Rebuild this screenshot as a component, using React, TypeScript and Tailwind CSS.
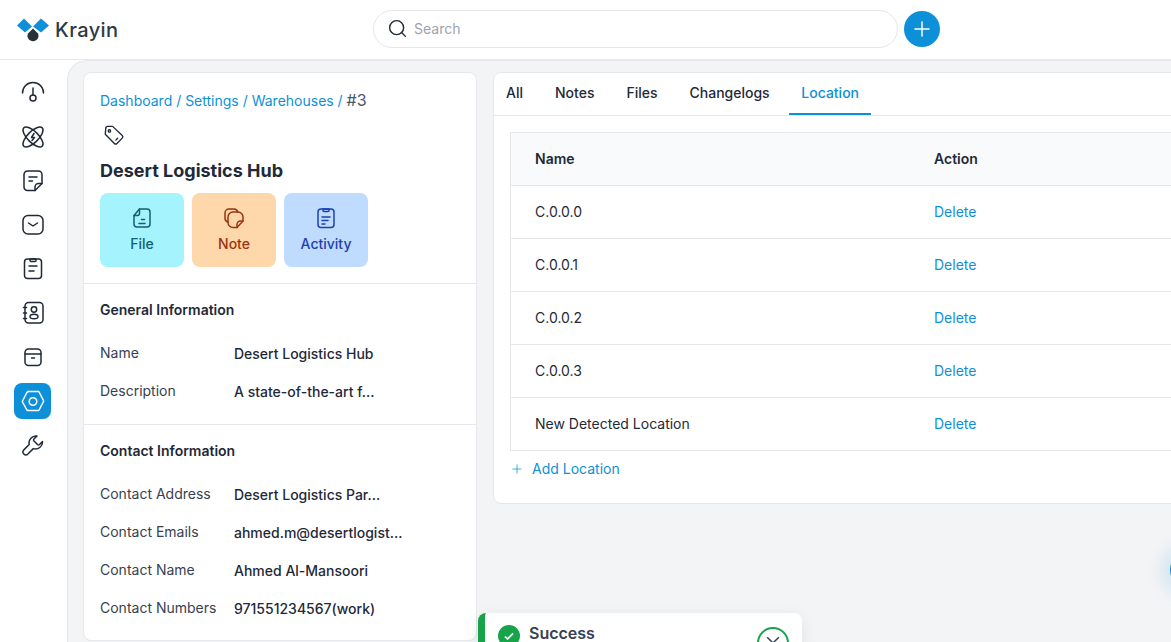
import { Plus, Search } from "lucide-react"
import type { ReactNode } from "react"

function Ico({ children, className = "w-6 h-6" }: { children: ReactNode; className?: string }) {
  return (
    <svg viewBox="0 0 24 24" fill="none" stroke="currentColor" strokeWidth="1.5" strokeLinecap="round" strokeLinejoin="round" className={className}>
      {children}
    </svg>
  )
}

const navIcons: ReactNode[] = [
  <><path d="M1.500 12a10.500 10.500 0 0 1 21 0" /><path d="M12 7v7" /><circle cx="12" cy="17" r="3" /></>,
  <>
    <ellipse cx="12" cy="12" rx="5.500" ry="13" transform="rotate(45 12 12)" />
    <ellipse cx="12" cy="12" rx="5.500" ry="13" transform="rotate(-45 12 12)" />
    <path d="M13 8.500 10.500 12.500h3L11 15.500" />
  </>,
  <>
    <path d="M14 21.500H6.500a3.500 3.500 0 0 1-3.500-3.500V5.500A3.500 3.500 0 0 1 6.500 2h11A3.500 3.500 0 0 1 21 5.500V14.500z" />
    <path d="M21 14.500h-3.500a3.500 3.500 0 0 0-3.500 3.500v3.500" />
    <path d="M8 8h8M8 12h3.500" />
  </>,
  <><rect x="2" y="2.500" width="20" height="18.500" rx="5" /><path d="m7.500 10 4.500 3 4.500-3" /></>,
  <>
    <rect x="3.500" y="2" width="17" height="19.500" rx="3" />
    <path d="M9 2h6v1.500a1 1 0 0 1-1 1h-4a1 1 0 0 1-1-1zM8 9h8M8 14h5" />
  </>,
  <>
    <rect x="4" y="1.500" width="18" height="20.500" rx="3.500" />
    <circle cx="13" cy="8.500" r="2.700" />
    <ellipse cx="13" cy="15.500" rx="4" ry="2.300" />
    <path d="M2.500 6.500h3M2.500 12h3M2.500 17.500h3" />
  </>,
  <>
    <rect x="4" y="4" width="16" height="16.500" rx="3.500" />
    <path d="M4 9h16M10.500 13h3" />
  </>,
  <>
    <path d="M6.800 2.500h10.400a1 1 0 0 1 .9.500l4.400 8.500a1 1 0 0 1 0 1l-4.400 8.500a1 1 0 0 1-.9.500H6.800a1 1 0 0 1-.9-.500L1.500 13a1 1 0 0 1 0-1l4.400-8.500a1 1 0 0 1 .9-.500z" />
    <circle cx="12" cy="12.500" r="3.800" />
  </>,
  <path d="M21.500 8.500l-3 3a1.500 1.500 0 0 1-2 0l-3.500-3.500a1.500 1.500 0 0 1 0-2l3-3A7 7 0 0 0 8.200 11.500l-5.400 5.400a2.900 2.900 0 0 0 4.100 4.100l5.400-5.400A7 7 0 0 0 21.500 8.500z" />,
]

function ActionButton({ label, box, icon }: { label: string; box: string; icon: ReactNode }) {
  return (
    <div className={`flex h-[74px] w-[84px] flex-col items-center justify-center gap-1 rounded-lg ${box}`}>
      <Ico>{icon}</Ico>
      <span className="text-sm font-medium leading-5">{label}</span>
    </div>
  )
}

function Attr({ label, value }: { label: string; value: string }) {
  return (
    <div className="flex h-[38px] items-start">
      <div className="w-[134px] text-sm leading-5 text-[#374151]">{label}</div>
      <div className="pt-px text-sm font-medium leading-5 text-[#1f2937]">{value}</div>
    </div>
  )
}

const rows = ["C.0.0.0", "C.0.0.1", "C.0.0.2", "C.0.0.3", "New Detected Location"]

export default function App() {
  return (
    <div className="relative h-[642px] w-[1171px] overflow-hidden bg-white font-['Inter',sans-serif]">
      {/* top bar */}
      <header className="relative flex h-[60px] items-center border-b border-[#e5e7eb] pl-4">
        <div className="flex w-[357px] items-center gap-[5px]">
          <svg viewBox="0 0 34 24" className="h-6 w-[34px]">
            <path d="M1 7.500 8 .5l8 8-7 6z" fill="#0e90d9" />
            <path d="M17 8.500 25 .5l8 7-8 7z" fill="#0e90d9" />
            <path d="M17 10.500l5 5a5.500 5.500 0 1 1-10 0z" fill="#263238" />
          </svg>
          <span className="text-[20px] font-medium leading-none tracking-[0.4px] text-[#2d3a42]">Krayin</span>
        </div>
        <div className="mb-0.5 flex h-[38px] w-[525px] items-center gap-1.5 rounded-full border border-[#e5e7eb] pl-[13px]">
          <Search className="h-[21px] w-[21px] text-[#1f2937]" strokeWidth={1.6} />
          <span className="text-sm text-[#9ca3af]">Search</span>
        </div>
        <div className="mb-0.5 ml-1.5 flex h-9 w-9 items-center justify-center rounded-full bg-[#0e90d9] text-white">
          <Plus className="h-6 w-6" strokeWidth={1.5} />
        </div>
      </header>

      <div className="flex h-[582px]">
        {/* sidebar */}
        <nav className="flex w-[67px] shrink-0 flex-col gap-2 pl-3.5 pt-[15px] text-[#1f2937]">
          {navIcons.map((icon, i) => (
            <div
              key={i}
              className={`flex h-9 w-[37px] items-center justify-center rounded-lg ${i === 7 ? "bg-[#0e90d9] text-white" : ""}`}
            >
              <Ico>{icon}</Ico>
            </div>
          ))}
        </nav>

        {/* main */}
        <main className="flex min-w-0 flex-1 gap-4 overflow-hidden rounded-tl-[20px] border-l border-t border-[#e5e7eb] bg-[#f3f4f6] pl-[15px] pt-[11px]">
          {/* left panel */}
          <section className="h-[569px] w-[394px] shrink-0 rounded-lg border border-[#e5e7eb] bg-white">
            <div className="px-4 pt-[17px]">
              <div className="text-sm leading-5 text-[#0e90d9]">
                Dashboard / Settings / Warehouses / <span className="text-base leading-5 text-[#4b5563]">#3</span>
              </div>
              <div className="mt-[15px] flex h-5 items-center pl-[3px] text-[#1f2937]">
                <Ico className="h-[22px] w-[22px]">
                  <path d="M3 4.500A2 2 0 0 1 5 2.500h5.500l10.500 10a2 2 0 0 1 0 2.800l-5.800 5.800a2 2 0 0 1-2.800 0L2.500 11z" transform="translate(0 -1)" />
                  <circle cx="7" cy="6.500" r="1.300" />
                  <path d="m14 16.500 2-2" />
                </Ico>
              </div>
              <h1 className="mt-[11px] text-lg font-bold leading-7 text-[#1f2937]">Desert Logistics Hub</h1>
              <div className="mt-2 flex gap-2">
                <ActionButton
                  label="File"
                  box="bg-[#a5f3fc] text-[#155e75]"
                  icon={
                    <>
                      <path d="M9.500 3H17a3 3 0 0 1 3 3v12a3 3 0 0 1-3 3H7a3 3 0 0 1-3-3V9.500z" />
                      <path d="M4 9.500h3.500a2 2 0 0 0 2-2V3M11.500 13.500h3M9 17.500h6" />
                    </>
                  }
                />
                <ActionButton
                  label="Note"
                  box="bg-[#fed7aa] text-[#9a3412]"
                  icon={
                    <>
                      <path d="M6 16a4 4 0 0 1-3-3.800V7a4 4 0 0 1 4-4h5a4 4 0 0 1 3.800 3" />
                      <path d="M15 21.500h-4a5 5 0 0 1-5-5V11a5 5 0 0 1 5-5h5a5 5 0 0 1 5 5v4z" />
                      <path d="M21 15h-2.500a3.500 3.500 0 0 0-3.500 3.500v3" />
                    </>
                  }
                />
                <ActionButton
                  label="Activity"
                  box="bg-[#bfdbfe] text-[#1e40af]"
                  icon={
                    <>
                      <rect x="4" y="3" width="16" height="18.500" rx="3" />
                      <path d="M9 3h6v1.500a1 1 0 0 1-1 1h-4a1 1 0 0 1-1-1zM8 11h8M8 14.500h6M8 18h3" />
                    </>
                  }
                />
              </div>
            </div>

            <div className="mt-4 border-t border-[#e5e7eb] px-4 pt-4">
              <h2 className="text-sm font-semibold leading-5 text-[#1f2937]">General Information</h2>
              <div className="mt-[23px]">
                <Attr label="Name" value="Desert Logistics Hub" />
                <Attr label="Description" value="A state-of-the-art f..." />
              </div>
            </div>

            <div className="mt-[5px] border-t border-[#e5e7eb] px-4 pt-4">
              <h2 className="text-sm font-semibold leading-5 text-[#1f2937]">Contact Information</h2>
              <div className="mt-[23px]">
                <Attr label="Contact Address" value="Desert Logistics Par..." />
                <Attr label="Contact Emails" value="ahmed.m@desertlogist..." />
                <Attr label="Contact Name" value="Ahmed Al-Mansoori" />
                <Attr label="Contact Numbers" value="971551234567(work)" />
              </div>
            </div>
          </section>

          {/* right panel */}
          <section className="h-[432px] w-[832px] shrink-0 rounded-lg border border-[#e5e7eb] bg-white">
            <div className="flex h-[43px] border-b border-[#e5e7eb] pl-3">
              {["All", "Notes", "Files", "Changelogs"].map((t) => (
                <div key={t} className="mr-8 flex items-center pb-[2px] text-sm font-medium text-[#1f2937]">{t}</div>
              ))}
              <div className="-ml-[13px] flex h-[42px] w-[82px] items-center justify-center border-b-2 border-[#0e90d9] pl-px text-sm font-medium text-[#0e90d9]">
                Location
              </div>
            </div>
            <div className="px-4 pt-4">
              <div className="border-l border-t border-[#e5e7eb]">
                <div className="grid h-[53px] grid-cols-[399px_1fr] items-center border-b border-[#e5e7eb] bg-[#f9fafb] pl-6 pb-px text-sm font-semibold text-[#1f2937]">
                  <span>Name</span>
                  <span>Action</span>
                </div>
                {rows.map((r) => (
                  <div key={r} className="grid h-[53px] grid-cols-[399px_1fr] items-center border-b border-[#e5e7eb] pl-6 text-sm text-[#1f2937]">
                    <span>{r}</span>
                    <span className="text-[#0e90d9]">Delete</span>
                  </div>
                ))}
              </div>
              <div className="mt-[8px] flex items-center gap-2 text-sm leading-5 text-[#0e90d9]">
                <Plus className="h-3.5 w-3.5" strokeWidth={1.3} />
                <span>Add Location</span>
              </div>
            </div>
          </section>
        </main>
      </div>

      {/* toast, cut off by the window */}
      <div className="absolute left-[478px] top-[613px] flex h-[70px] w-[324px] rounded-lg border-l-[7px] border-[#16a34a] bg-white pl-[13px] pt-[12px] shadow-[0_4px_16px_rgba(0,0,0,0.08)]">
        <div className="flex h-[22px] w-[22px] items-center justify-center rounded-full bg-[#16a34a] text-white">
          <svg viewBox="0 0 24 24" fill="none" stroke="currentColor" strokeWidth="3" className="h-3.5 w-3.5"><path d="m5 13 4.500 4L19 7.500" /></svg>
        </div>
        <div className="ml-[9px] -mt-[1px] h-[18px] text-base font-semibold leading-[18px] text-[#374151]">Success</div>
        <div className="absolute left-[272px] top-[14px] flex h-8 w-8 items-center justify-center rounded-full border-2 border-[#16a34a] text-[#374151]">
          <svg viewBox="0 0 24 24" fill="none" stroke="currentColor" strokeWidth="1.800" className="h-5 w-5"><path d="m5 5 14 14M19 5 5 19" /></svg>
        </div>
      </div>

      {/* floating button peeking in at the right edge */}
      <div className="absolute left-[1170px] top-[552px] h-9 w-9 rounded-full bg-[#0e90d9] shadow-[0_0_16px_8px_rgba(14,144,217,0.15)]" />
    </div>
  )
}
